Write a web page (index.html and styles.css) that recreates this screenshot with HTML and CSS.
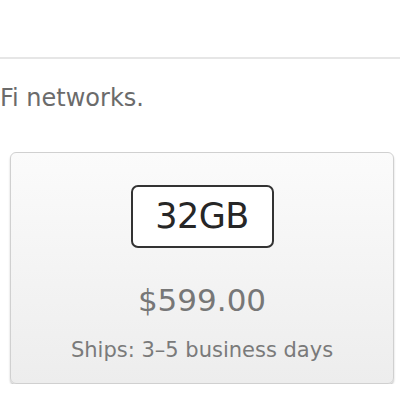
FILE: index.html
```html
<!DOCTYPE html>
<html>
<head>
<meta charset="utf-8">
<link rel="stylesheet" href="styles.css">
</head>
<body>
<div class="topbar"></div>
<p class="desc">Fi networks.</p>
<div class="card">
  <div class="badge">32GB</div>
  <div class="price">$599.00</div>
  <div class="ships">Ships: 3–5 business days</div>
</div>
</body>
</html>
```
FILE: styles.css
```css
html, body {
  margin: 0;
  padding: 0;
  background: #ffffff;
  font-family: "DejaVu Sans", "Liberation Sans", sans-serif;
}
.topbar {
  height: 57px;
  border-bottom: 2px solid #e6e6e6;
}
.desc {
  margin: 24px 0 0 0;
  font-size: 24px;
  line-height: 30px;
  color: #6b6b6b;
}
.card {
  margin: 39px 0 0 10px;
  width: 384px;
  box-sizing: border-box;
  border: 1px solid #d0d0d0;
  border-radius: 6px;
  padding: 32px 0 20px;
  background: linear-gradient(#fbfbfb, #ededed);
  box-shadow: 0 2px 2px rgba(0, 0, 0, 0.22);
  display: flex;
  flex-direction: column;
  align-items: center;
}
.badge {
  width: 143px;
  height: 63px;
  box-sizing: border-box;
  border: 2px solid #333333;
  border-radius: 7px;
  background: #ffffff;
  text-align: center;
  font-size: 35px;
  line-height: 59px;
  letter-spacing: -0.5px;
  color: #262626;
}
.price {
  margin-top: 34px;
  font-size: 31px;
  line-height: 36px;
  color: #777777;
}
.ships {
  margin-top: 19px;
  font-size: 21px;
  line-height: 26px;
  color: #7a7a7a;
}
```
